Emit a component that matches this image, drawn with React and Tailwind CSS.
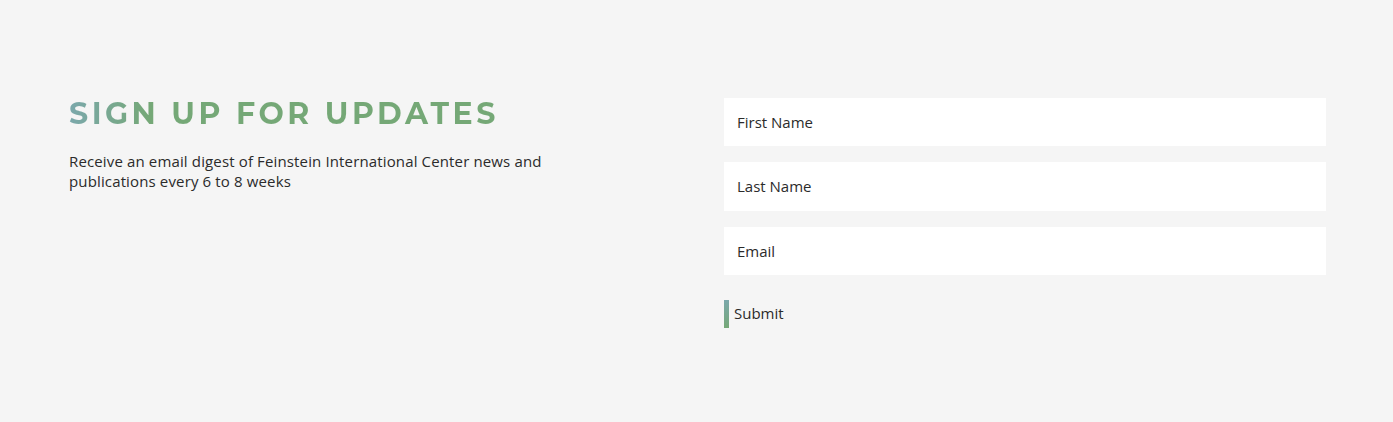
export default function App() {
  return (
    <div className="min-h-[422px] w-full bg-[#f5f5f5]" style={{ fontFamily: '"Open Sans", "Liberation Sans", sans-serif' }}>
      <div className="flex pl-[69px] pr-[67px] pt-[98px]">
        <div className="flex-1 pr-[80px]">
          <h2
            className="mt-[-2px] bg-[linear-gradient(90deg,#7ba8ab_0%,#75a877_14%,#75a876_100%)] bg-clip-text text-[30px] font-bold uppercase leading-[36px] tracking-[3.5px] text-transparent"
            style={{ fontFamily: '"Montserrat", "Noto Sans", "Open Sans", sans-serif' }}
          >
            Sign up for updates
          </h2>
          <p className="mt-[19px] max-w-[490px] text-[15px] leading-[20px] tracking-[0.14px] text-[#2b2b2b]">
            Receive an email digest of Feinstein International Center news and publications every 6 to 8 weeks
          </p>
        </div>
        <form className="flex w-[602px] flex-col gap-[16px]" onSubmit={(e) => e.preventDefault()}>
          <input
            className="h-[48px] w-full bg-white px-[13px] text-[15px] text-[#2b2b2b] outline-none placeholder:text-[#2b2b2b]"
            placeholder="First Name"
          />
          <input
            className="h-[49px] w-full bg-white px-[13px] pb-[1px] text-[15px] text-[#2b2b2b] outline-none placeholder:text-[#2b2b2b]"
            placeholder="Last Name"
          />
          <input
            className="h-[48px] w-full bg-white px-[13px] pb-[1px] text-[15px] text-[#2b2b2b] outline-none placeholder:text-[#2b2b2b]"
            placeholder="Email"
          />
          <div className="mt-[9px] flex">
            <button
              type="submit"
              className="flex h-[28px] items-start text-[15px] leading-[20px] text-[#2b2b2b]"
            >
              <span className="mr-[5px] h-[28px] w-[5px] bg-[linear-gradient(180deg,#7ba8ab,#75a877)]" />
              <span className="pt-[3px]">Submit</span>
            </button>
          </div>
        </form>
      </div>
    </div>
  );
}
